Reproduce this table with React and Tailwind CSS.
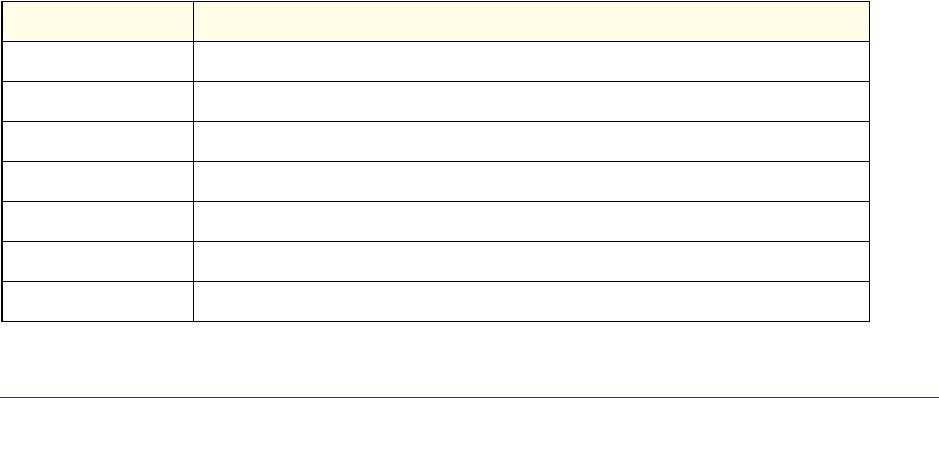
import React from 'react';

const rows = Array.from({ length: 7 });

const App = () => {
  return (
    <div className="w-[939px] h-[467px] bg-white pt-px">
      <div className="ml-px w-[869px] border-t border-r border-b border-l-2 border-black">
        {/* header */}
        <div className="flex h-[39px] bg-[#fffde6]">
          <div className="w-[190px] shrink-0" />
          <div className="flex-1 border-l border-black" />
        </div>
        {rows.map((_, i) => (
          <div key={i} className="flex h-[40px] border-t border-black">
            <div className="w-[190px] shrink-0" />
            <div className="flex-1 border-l border-black" />
          </div>
        ))}
      </div>
      <div className="mt-[75px] h-px w-full bg-[#333380]" />
    </div>
  );
};

export default App;
